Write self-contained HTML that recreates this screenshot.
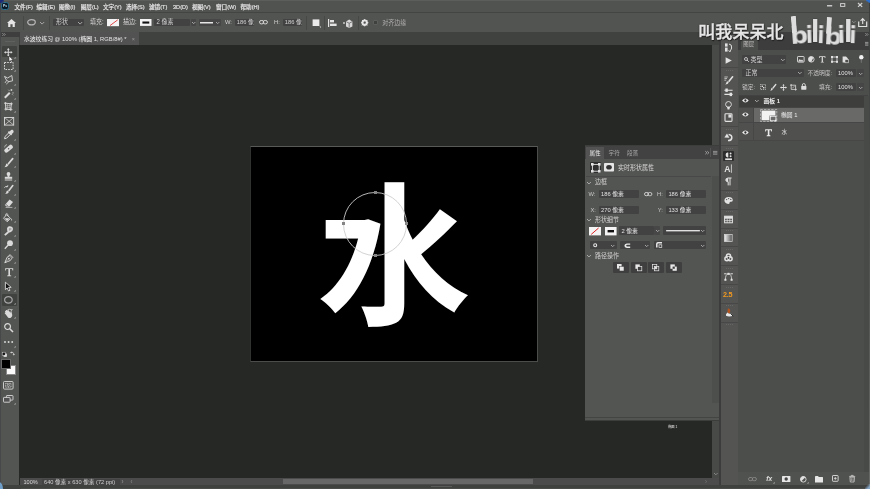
<!DOCTYPE html>
<html lang="zh-CN"><head><meta charset="utf-8"><title>水波纹练习</title>
<style>
*{box-sizing:border-box;margin:0;padding:0}
html,body{width:870px;height:489px;overflow:hidden;background:#262825}
body{position:relative;font-family:"Liberation Sans","Noto Sans CJK SC",sans-serif;color:#d2d2d2;font-size:6px;line-height:8px}
.a{position:absolute}
.t{position:absolute;white-space:nowrap;height:8px;line-height:8px;filter:blur(.35px);transform:scaleY(1.06)}
.m{font-weight:500}
.in{position:absolute;background:#424242;border-radius:1px}
svg{position:absolute;overflow:visible;filter:blur(.3px)}
.sep{position:absolute;width:1px;background:#474947}
.hs{position:absolute;height:1px;background:#434343}
</style></head><body>
<div class="a" style="left:0px;top:0px;width:870px;height:13px;background:#515350;"></div>
<div class="a" style="left:0px;top:0px;width:870px;height:1px;background:#5c5e5c;"></div>
<div class="a" style="left:0px;top:12px;width:870px;height:19.8px;background:#525451;border-top:1px solid #434543"></div>
<div class="a" style="left:0px;top:31.6px;width:721px;height:13.9px;background:#40423f;"></div>
<div class="a" style="left:20.4px;top:32.2px;width:118.4px;height:13.3px;background:#525252;"></div>
<div class="a" style="left:19.5px;top:45.5px;width:692.5px;height:432.5px;background:#262825;"></div>
<div class="a" style="left:250px;top:145.9px;width:288px;height:216.1px;background:#000;border:1px solid #4b4d4b;border-top:1.6px solid #585a58;border-left-color:#303230"></div>
<div class="a" style="left:712px;top:45px;width:7.3px;height:433px;background:#484a48;"></div>
<div class="a" style="left:20px;top:478px;width:699px;height:7px;background:#4a4b4a;"></div>
<div class="a" style="left:283px;top:479px;width:250px;height:5px;background:#676767;"></div>
<div class="a" style="left:0px;top:485.2px;width:870px;height:3.8px;background:#3f413f;"></div>
<div class="a" style="left:21px;top:487.8px;width:848px;height:1.2px;background:#4a4c4a;"></div>
<div class="a" style="left:431px;top:485.5px;width:21px;height:1.5px;background:#5a5a5a;"></div>
<div class="a" style="left:0px;top:32px;width:19.3px;height:453.2px;background:#535552;"></div>
<div class="a" style="left:0px;top:32px;width:19.5px;height:4.8px;background:#3e3e3e;"></div>
<div class="a" style="left:0px;top:0px;width:1.4px;height:489px;background:#46484a;"></div>
<div class="a" style="left:719px;top:32px;width:151px;height:453px;background:#3c3c3c;"></div>
<div class="a" style="left:868.7px;top:0px;width:1.3px;height:489px;background:linear-gradient(#3c3e3e 0%,#4a4c4a 40%,#686a68 100%);"></div>
<div class="a" style="left:721px;top:32px;width:17.3px;height:453px;background:#545553;"></div>
<div class="a" style="left:738.3px;top:32px;width:130.5px;height:453px;background:#4c4e4b;"></div>
<div class="a" style="left:1.2px;top:2.2px;width:7.6px;height:7.4px;background:#0a1a28;border:1.3px solid #2b6f8f;border-radius:2.4px;filter:blur(.35px)"></div>
<div class="t" style="left:2.9px;top:2px;font-size:3.4px;color:#cfe6f5;font-weight:bold">Ps</div>
<div class="t" style="left:14.5px;top:3px;font-size:5.6px;color:#e0e0e0;font-weight:500;-webkit-text-stroke:.18px #e0e0e0">文件(F)</div>
<div class="t" style="left:36.5px;top:3px;font-size:5.6px;color:#e0e0e0;font-weight:500;-webkit-text-stroke:.18px #e0e0e0">编辑(E)</div>
<div class="t" style="left:59px;top:3px;font-size:5.6px;color:#e0e0e0;font-weight:500;-webkit-text-stroke:.18px #e0e0e0">图像(I)</div>
<div class="t" style="left:80.7px;top:3px;font-size:5.6px;color:#e0e0e0;font-weight:500;-webkit-text-stroke:.18px #e0e0e0">图层(L)</div>
<div class="t" style="left:103px;top:3px;font-size:5.6px;color:#e0e0e0;font-weight:500;-webkit-text-stroke:.18px #e0e0e0">文字(Y)</div>
<div class="t" style="left:126px;top:3px;font-size:5.6px;color:#e0e0e0;font-weight:500;-webkit-text-stroke:.18px #e0e0e0">选择(S)</div>
<div class="t" style="left:149px;top:3px;font-size:5.6px;color:#e0e0e0;font-weight:500;-webkit-text-stroke:.18px #e0e0e0">滤镜(T)</div>
<div class="t" style="left:173px;top:3px;font-size:5.6px;color:#e0e0e0;font-weight:500;-webkit-text-stroke:.18px #e0e0e0">3D(D)</div>
<div class="t" style="left:192px;top:3px;font-size:5.6px;color:#e0e0e0;font-weight:500;-webkit-text-stroke:.18px #e0e0e0">视图(V)</div>
<div class="t" style="left:216px;top:3px;font-size:5.6px;color:#e0e0e0;font-weight:500;-webkit-text-stroke:.18px #e0e0e0">窗口(W)</div>
<div class="t" style="left:240.5px;top:3px;font-size:5.6px;color:#e0e0e0;font-weight:500;-webkit-text-stroke:.18px #e0e0e0">帮助(H)</div>
<svg style="left:827.2px;top:5.2px;" width="5.2" height="1.6" viewBox="0 0 5.2 1.6"><rect width="5.2" height="1.5" fill="#c8c8c8"/></svg>
<svg style="left:840px;top:3px;" width="5.4" height="4" viewBox="0 0 5.4 4"><rect x=".6" y=".6" width="4.2" height="2.8" fill="none" stroke="#cfcfcf" stroke-width="1"/></svg>
<svg style="left:857.7px;top:3px;" width="4.2" height="3.9" viewBox="0 0 4.2 3.9"><path d="M0 0L4.2 3.9M4.2 0L0 3.9" stroke="#d0d0d0" stroke-width="1.25"/></svg>
<svg style="left:7px;top:19px;" width="9" height="8" viewBox="0 0 9 8"><path d="M4.5 0L9 4H7.8V8H5.6V5.2H3.4V8H1.2V4H0Z" fill="#e6e6e6"/></svg>
<div class="sep" style="left:23px;top:16px;height:14px"></div>
<div class="sep" style="left:49px;top:16px;height:14px"></div>
<svg style="left:26.7px;top:19.4px;" width="9" height="6.6" viewBox="0 0 9 6.6"><ellipse cx="4.5" cy="3.3" rx="3.8" ry="2.6" fill="none" stroke="#b4b4b4" stroke-width="1.3"/></svg>
<svg style="left:40.4px;top:21.95px;" width="4.2" height="2.1" viewBox="0 0 4.2 2.1"><path d="M0 0L2.1 2.1L4.2 0" fill="none" stroke="#ababab" stroke-width="0.95"/></svg>
<div class="in" style="left:53px;top:18.7px;width:30.5px;height:7.5px;background:#424242;"></div>
<div class="t" style="left:56px;top:18.4px;font-size:6px;">形状</div>
<svg style="left:78.2px;top:21.95px;" width="4.2" height="2.1" viewBox="0 0 4.2 2.1"><path d="M0 0L2.1 2.1L4.2 0" fill="none" stroke="#ababab" stroke-width="0.95"/></svg>
<div class="t" style="left:90px;top:18.4px;font-size:6px;">填充:</div>
<svg style="left:107px;top:18.9px;" width="12" height="7.2" viewBox="0 0 12 7.2"><rect width="12" height="7.2" fill="#f4f4f4"/><path d="M3 6.6L10.8 .8" stroke="#d33" stroke-width=".9"/></svg>
<div class="t" style="left:123px;top:18.4px;font-size:6px;">描边:</div>
<svg style="left:140px;top:19.1px;" width="11.5" height="6.9" viewBox="0 0 11.5 6.9"><rect width="11.5" height="6.9" fill="#f4f4f4"/><rect x="2.4" y="2.5" width="6.9" height="2.1" fill="#111"/></svg>
<div class="in" style="left:154px;top:18.7px;width:36px;height:7.5px;background:#424242;"></div>
<div class="t" style="left:156.5px;top:18.4px;font-size:6px;">2 像素</div>
<div class="in" style="left:190.5px;top:18.7px;width:5.5px;height:7.5px;background:#464646;"></div>
<svg style="left:191.51999999999998px;top:22.16px;" width="3.36" height="1.68" viewBox="0 0 3.36 1.68"><path d="M0 0L1.68 1.68L3.36 0" fill="none" stroke="#ababab" stroke-width="0.95"/></svg>
<div class="in" style="left:199px;top:18.7px;width:22px;height:7.5px;background:#464646;"></div>
<svg style="left:200.4px;top:21.9px;" width="13" height="1.5" viewBox="0 0 13 1.5"><rect width="13" height="1.5" fill="#e6e6e6"/></svg>
<svg style="left:215.62px;top:22.16px;" width="3.36" height="1.68" viewBox="0 0 3.36 1.68"><path d="M0 0L1.68 1.68L3.36 0" fill="none" stroke="#ababab" stroke-width="0.95"/></svg>
<div class="t" style="left:225px;top:18.4px;font-size:5.8px;">W:</div>
<div class="in" style="left:235px;top:18.7px;width:19px;height:7.5px;background:#424242;"></div>
<div class="t" style="left:236.8px;top:18.4px;font-size:5.8px;">186 像</div>
<svg style="left:259px;top:20.3px;" width="9" height="4.6" viewBox="0 0 9 4.6"><rect x=".5" y=".5" width="4.2" height="3.4" rx="1.7" fill="none" stroke="#d8d8d8" stroke-width="1"/><rect x="4.2" y=".5" width="4.2" height="3.4" rx="1.7" fill="none" stroke="#d8d8d8" stroke-width="1"/></svg>
<div class="t" style="left:274px;top:18.4px;font-size:5.8px;">H:</div>
<div class="in" style="left:283px;top:18.7px;width:19px;height:7.5px;background:#424242;"></div>
<div class="t" style="left:284.8px;top:18.4px;font-size:5.8px;">186 像</div>
<div class="sep" style="left:306px;top:16px;height:14px"></div>
<svg style="left:311.7px;top:19px;" width="9" height="9" viewBox="0 0 9 9"><rect x=".6" y=".4" width="6.8" height="6.6" fill="#e9e9e9"/><path d="M7.4 7.6h1.6v1.4z" fill="#ddd"/></svg>
<div class="sep" style="left:323.5px;top:16px;height:14px"></div>
<svg style="left:327.5px;top:19px;" width="9" height="8" viewBox="0 0 9 8"><path d="M.6 0V8" stroke="#e4e4e4" stroke-width="1.2"/><rect x="2" y="1" width="4" height="2.4" fill="#e4e4e4"/><rect x="2" y="4.6" width="6.6" height="2.4" fill="#e4e4e4"/></svg>
<svg style="left:343px;top:18.5px;" width="10" height="9" viewBox="0 0 10 9"><path d="M0 4h2M1 3v2" stroke="#ddd" stroke-width=".8"/><path d="M3 2.6L6.2 .6L9.4 2.6V7.4L6.2 9L3 7.4Z" fill="#d8d8d8"/><path d="M3.4 2.8L6.2 4.2L9 2.8M6.2 4.2V8.6" stroke="#555" stroke-width=".7" fill="none"/></svg>
<div class="sep" style="left:358px;top:16px;height:14px"></div>
<svg style="left:361px;top:19.1px;" width="7.4" height="7.4" viewBox="0 0 8.4 8.4"><circle cx="4.2" cy="4.2" r="2.6" fill="none" stroke="#e6e6e6" stroke-width="2"/><path d="M4.2 0V8.4M0 4.2H8.4M1.2 1.2L7.2 7.2M7.2 1.2L1.2 7.2" stroke="#e6e6e6" stroke-width="1.1"/><circle cx="4.2" cy="4.2" r="1.3" fill="#525451"/></svg>
<div class="a" style="left:373.2px;top:20.4px;width:4.8px;height:4.8px;background:#3f413f;border:.7px solid #5c5e5c;border-radius:1px"></div>
<div class="t" style="left:382.3px;top:18.7px;font-size:6px;color:#b0b0b0;">对齐边缘</div>
<div class="t" style="left:24px;top:34.5px;font-size:5.8px;color:#e2e2e2;font-weight:500">水波纹练习 @ 100% (椭圆 1, RGB/8#) *</div>
<div class="t" style="left:131.8px;top:34.5px;font-size:5.5px;color:#9c9c9c;">×</div>
<div class="t" style="left:23.5px;top:478px;font-size:5.6px;color:#d8d8d8;">100%</div>
<div class="a" style="left:42px;top:478.5px;width:77.5px;height:6.5px;background:#424342;"></div>
<div class="t" style="left:44px;top:478px;font-size:5.65px;color:#cfcfcf;">640 像素 x 630 像素 (72 ppi)</div>
<div class="t" style="left:121.5px;top:478px;font-size:6px;color:#9a9a9a;">›</div>
<div class="t" style="left:130.5px;top:478px;font-size:6px;color:#8a8a8a;">‹</div>
<div class="t" style="left:705px;top:478px;font-size:6px;color:#7a7a7a;">›</div>
<svg style="left:713.68px;top:473.09px;" width="3.64" height="1.82" viewBox="0 0 3.64 1.82"><path d="M0 0L1.82 1.82L3.64 0" fill="none" stroke="#8a8a8a" stroke-width="0.95"/></svg>
<svg style="left:2.2px;top:33px;" width="3.6" height="3" viewBox="0 0 3.6 3"><path d="M.3 .2L1.6 1.5L.3 2.8M2 .2L3.3 1.5L2 2.8" fill="none" stroke="#a8a8a8" stroke-width=".7"/></svg>
<div class="a" style="left:5px;top:40.6px;width:10px;height:1px;background:#606060;"></div>
<div class="a" style="left:1.5px;top:46.2px;width:15.8px;height:11.3px;background:#404240;border-radius:1px"></div>
<div class="a" style="left:1.5px;top:294px;width:15.8px;height:11.8px;background:#404240;border-radius:1px"></div>
<svg style="left:4.000000000000001px;top:47.800000000000004px;" width="8.6" height="8.6" viewBox="0 0 8.6 8.6"><path d="M4.3 0L5.7 1.8H4.8V3.8H6.8V2.9L8.6 4.3L6.8 5.7V4.8H4.8V6.8H5.7L4.3 8.6L2.9 6.8H3.8V4.8H1.8V5.7L0 4.3L1.8 2.9V3.8H3.8V1.8H2.9Z" fill="#dadada"/></svg>
<svg style="left:13.8px;top:56.5px;" width="1.6" height="1.6" viewBox="0 0 1.6 1.6"><path d="M1.6 0V1.6H0Z" fill="#c8c8c8"/></svg>
<svg style="left:8.6px;top:56.2px;" width="5" height="7" viewBox="0 0 5 7"><path d="M0 0L0 5.6L1.4 4.4L2.4 6.6L3.4 6.1L2.4 4L4.2 4Z" fill="#fff" stroke="#222" stroke-width=".5"/></svg>
<svg style="left:3.500000000000001px;top:62.22px;" width="9.6" height="8" viewBox="0 0 9.6 8"><rect x=".5" y=".5" width="8.6" height="7" fill="none" stroke="#dadada" stroke-width="1" stroke-dasharray="1.6 1.1"/></svg>
<svg style="left:13.8px;top:70.22px;" width="1.6" height="1.6" viewBox="0 0 1.6 1.6"><path d="M1.6 0V1.6H0Z" fill="#c8c8c8"/></svg>
<svg style="left:3.8000000000000007px;top:75.34px;" width="9" height="9.6" viewBox="0 0 9 9.6"><path d="M.5 1.4L3.6 3L7.8 .5L8.6 5.8L5 6.6L2.6 5.4Z" fill="none" stroke="#dadada" stroke-width=".9"/><path d="M5 6.6L2.2 9.2M2.6 5.4L1 8" fill="none" stroke="#dadada" stroke-width=".8"/></svg>
<svg style="left:13.8px;top:83.94px;" width="1.6" height="1.6" viewBox="0 0 1.6 1.6"><path d="M1.6 0V1.6H0Z" fill="#c8c8c8"/></svg>
<svg style="left:3.6000000000000005px;top:88.86px;" width="9.4" height="9.6" viewBox="0 0 9.4 9.6"><path d="M.8 8.8L5.8 3.8" stroke="#dadada" stroke-width="2"/><path d="M7.4 0V2M6.4 1h2M9 3.2v1.4M4.4 .8l1 1M8.2 5.4l.8.8" stroke="#dadada" stroke-width=".8"/></svg>
<svg style="left:13.8px;top:97.66px;" width="1.6" height="1.6" viewBox="0 0 1.6 1.6"><path d="M1.6 0V1.6H0Z" fill="#c8c8c8"/></svg>
<svg style="left:3.8000000000000007px;top:102.47999999999999px;" width="9" height="9" viewBox="0 0 9 9"><path d="M1.4 1.2L7.4 1.8L6.8 7.6L1.8 7.2Z" fill="none" stroke="#dadada" stroke-width=".9"/><path d="M1.5 3.2L7.2 3.7M1.7 5.2L7 5.7M3.4 1.4L3.5 7.3M5.4 1.6L5.2 7.5" stroke="#dadada" stroke-width=".45"/><path d="M1.4 0V2M0 1.2H2.6M7.4 .4V3M6 1.8H8.8M6.8 6V9M5.4 7.6H8.4M1.8 5.8V8.6M.4 7.2H3" stroke="#dadada" stroke-width=".8"/></svg>
<svg style="left:13.8px;top:111.38px;" width="1.6" height="1.6" viewBox="0 0 1.6 1.6"><path d="M1.6 0V1.6H0Z" fill="#c8c8c8"/></svg>
<svg style="left:3.800000000000001px;top:116.80000000000001px;" width="10.2" height="8.6" viewBox="0 0 10.2 8.6"><rect x=".5" y=".5" width="9.2" height="7.6" fill="none" stroke="#dadada" stroke-width=".9"/><path d="M.5 .5L9.7 8.1M9.7 .5L.5 8.1" stroke="#dadada" stroke-width=".7"/></svg>
<svg style="left:3.6000000000000005px;top:130.12px;" width="9.4" height="9.4" viewBox="0 0 9.4 9.4"><path d="M.6 8.8L1 6.6L5 2.6L6.6 4.2L2.6 8.2Z" fill="none" stroke="#dadada" stroke-width="1"/><path d="M4.4 1.6L7.6 4.8M5.6 2.8L7.4 .8Q8.4 .2 8.8 1.2Q9 2 8.2 2.6L6.4 4" stroke="#dadada" stroke-width="1.7" fill="#dadada"/></svg>
<svg style="left:13.8px;top:138.82px;" width="1.6" height="1.6" viewBox="0 0 1.6 1.6"><path d="M1.6 0V1.6H0Z" fill="#c8c8c8"/></svg>
<svg style="left:3.6000000000000005px;top:143.84000000000003px;" width="9.4" height="9.4" viewBox="0 0 9.4 9.4"><rect x="-.2" y="2.6" width="9.6" height="4.2" rx="1.6" transform="rotate(-40 4.6 4.7)" fill="#dadada"/><circle cx="4.6" cy="4.7" r=".7" fill="#555"/><path d="M.6 3.4Q.8 .8 3 .6" stroke="#dadada" stroke-width=".7" fill="none"/></svg>
<svg style="left:13.8px;top:152.54000000000002px;" width="1.6" height="1.6" viewBox="0 0 1.6 1.6"><path d="M1.6 0V1.6H0Z" fill="#c8c8c8"/></svg>
<svg style="left:3.6000000000000005px;top:157.56px;" width="9.4" height="9.4" viewBox="0 0 9.4 9.4"><path d="M8.7 .6L4.4 5.8" stroke="#dadada" stroke-width="1.7" stroke-linecap="round"/><path d="M2.8 5.6L4.4 7.2Q3.4 9.2 .4 9.2Q1.8 8 1.8 7Q2 6 2.8 5.6Z" fill="#dadada"/></svg>
<svg style="left:13.8px;top:166.26px;" width="1.6" height="1.6" viewBox="0 0 1.6 1.6"><path d="M1.6 0V1.6H0Z" fill="#c8c8c8"/></svg>
<svg style="left:3.8000000000000007px;top:171.68px;" width="9" height="8.6" viewBox="0 0 9 8.6"><circle cx="4.5" cy="1.9" r="1.9" fill="#dadada"/><path d="M3.6 3V5H5.4V3Z" fill="#dadada"/><path d="M.8 4.8H8.2V6.8H.8Z" fill="#dadada"/><rect x=".8" y="7.5" width="7.4" height="1" fill="#dadada"/></svg>
<svg style="left:13.8px;top:179.98000000000002px;" width="1.6" height="1.6" viewBox="0 0 1.6 1.6"><path d="M1.6 0V1.6H0Z" fill="#c8c8c8"/></svg>
<svg style="left:3.6000000000000005px;top:185.00000000000003px;" width="9.4" height="9.4" viewBox="0 0 9.4 9.4"><path d="M8.8 .6L5 5.6" stroke="#dadada" stroke-width="1.6" stroke-linecap="round"/><path d="M3.4 5.6L5 7Q4 9 1.2 9Q2.4 7.8 2.4 6.8Q2.6 6 3.4 5.6Z" fill="#dadada"/><path d="M.4 2.6Q1.6 .8 3.6 1.6M3.6 1.6L3.8 .3M3.6 1.6L2.4 2" stroke="#dadada" stroke-width=".9" fill="none"/></svg>
<svg style="left:13.8px;top:193.70000000000002px;" width="1.6" height="1.6" viewBox="0 0 1.6 1.6"><path d="M1.6 0V1.6H0Z" fill="#c8c8c8"/></svg>
<svg style="left:3.6000000000000005px;top:198.92000000000002px;" width="9.4" height="9" viewBox="0 0 9.4 9"><path d="M5.6 .6L9 3L5.4 7.4H2.6L.8 6Z" fill="#dadada"/><path d="M1.6 5.2L4.2 7.2" stroke="#555" stroke-width=".7"/><path d="M1.6 8.4H8.4" stroke="#dadada" stroke-width=".7"/></svg>
<svg style="left:13.8px;top:207.42000000000002px;" width="1.6" height="1.6" viewBox="0 0 1.6 1.6"><path d="M1.6 0V1.6H0Z" fill="#c8c8c8"/></svg>
<svg style="left:3.4000000000000004px;top:212.54000000000002px;" width="9.8" height="9.2" viewBox="0 0 9.8 9.2"><path d="M3.6 1.6L7.6 5.4L4.2 8.8L.6 5.2Z" fill="none" stroke="#dadada" stroke-width=".9"/><path d="M1.6 5.2H6.8L4.2 8Z" fill="#dadada"/><path d="M2.8 2.8Q2.2 .4 3.8 .4Q5.2 .6 5 3.2" stroke="#dadada" stroke-width=".7" fill="none"/><path d="M8.5 5.2Q9.8 7.2 8.7 7.8Q7.6 7.4 8.5 5.2Z" fill="#dadada"/></svg>
<svg style="left:13.8px;top:221.14000000000001px;" width="1.6" height="1.6" viewBox="0 0 1.6 1.6"><path d="M1.6 0V1.6H0Z" fill="#c8c8c8"/></svg>
<svg style="left:3.6000000000000005px;top:226.06px;" width="9.4" height="9.6" viewBox="0 0 9.4 9.6"><path d="M5 .3Q8.8 0 9 3Q8.8 5.6 6.4 6.2L4.6 6.8Q2.8 5 3 2.8Q3.4 .8 5 .3Z" fill="#dadada"/><path d="M4.4 6L.8 9.2" stroke="#dadada" stroke-width="1.8"/><path d="M5.4 2.2V4.6M6.8 2V4.2" stroke="#555" stroke-width=".5"/></svg>
<svg style="left:13.8px;top:234.86px;" width="1.6" height="1.6" viewBox="0 0 1.6 1.6"><path d="M1.6 0V1.6H0Z" fill="#c8c8c8"/></svg>
<svg style="left:3.6000000000000005px;top:239.88000000000002px;" width="9.4" height="9.4" viewBox="0 0 9.4 9.4"><circle cx="6" cy="3.2" r="2.9" fill="#dadada"/><path d="M4 5.2L.8 8.8" stroke="#dadada" stroke-width="1.3"/></svg>
<svg style="left:13.8px;top:248.58px;" width="1.6" height="1.6" viewBox="0 0 1.6 1.6"><path d="M1.6 0V1.6H0Z" fill="#c8c8c8"/></svg>
<svg style="left:3.6000000000000005px;top:253.60000000000002px;" width="9.4" height="9.4" viewBox="0 0 9.4 9.4"><path d="M6 .6L8.8 3.4L7.6 4.6Q7 7 3.6 7.6L.8 8.8L2 6Q2.6 2.6 5 2Z" fill="none" stroke="#dadada" stroke-width=".95"/><circle cx="4.9" cy="4.7" r=".9" fill="#dadada"/><path d="M1 8.6L4.4 5.2" stroke="#dadada" stroke-width=".6"/><path d="M5.2 1.6L7.8 4.2" stroke="#dadada" stroke-width=".7"/></svg>
<svg style="left:13.8px;top:262.3px;" width="1.6" height="1.6" viewBox="0 0 1.6 1.6"><path d="M1.6 0V1.6H0Z" fill="#c8c8c8"/></svg>
<svg style="left:4.700000000000001px;top:267.82px;" width="8.4" height="8.4" viewBox="0 0 8.4 8.4"><path d="M.2 .2H8.2V2.4H7.5L7.1 1.1H5V7.3L6.2 7.6V8.2H2.2V7.6L3.4 7.3V1.1H1.3L.9 2.4H.2Z" fill="#dadada"/></svg>
<svg style="left:13.8px;top:276.02px;" width="1.6" height="1.6" viewBox="0 0 1.6 1.6"><path d="M1.6 0V1.6H0Z" fill="#c8c8c8"/></svg>
<svg style="left:5.200000000000001px;top:281.64000000000004px;" width="6.6" height="9.4" viewBox="0 0 6.6 9.4"><path d="M.4 .2L.4 7.6L2.2 6L3.6 9L5 8.3L3.6 5.4L6.2 5.4Z" fill="#111" stroke="#eee" stroke-width=".8"/></svg>
<svg style="left:13.8px;top:289.74px;" width="1.6" height="1.6" viewBox="0 0 1.6 1.6"><path d="M1.6 0V1.6H0Z" fill="#c8c8c8"/></svg>
<svg style="left:3.9000000000000004px;top:295.76000000000005px;" width="8.8" height="7.8" viewBox="0 0 8.8 7.8"><ellipse cx="4.4" cy="3.9" rx="3.8" ry="3.3" fill="none" stroke="#a6a6a6" stroke-width="1.2"/></svg>
<svg style="left:13.8px;top:303.46000000000004px;" width="1.6" height="1.6" viewBox="0 0 1.6 1.6"><path d="M1.6 0V1.6H0Z" fill="#c8c8c8"/></svg>
<svg style="left:4.000000000000001px;top:309.18px;" width="9" height="9.6" viewBox="0 0 9 9.6"><g transform="rotate(-38 4.5 5)"><path d="M2 4.4V2Q2.6 1.2 3.2 2V1Q3.8 .2 4.4 1V.8Q5 0 5.6 .8V1.6Q6.2 .9 6.8 1.7V5.6Q7 4.4 8.2 4.2Q8.8 4.4 8.2 5.2L6.8 8.2Q6 9.4 4.4 9.4Q2.4 9.2 2 7.4Z" fill="#dadada"/></g><path d="M3.6 .6Q6 -.4 8 1.2M8 1.2L8.2 0M8 1.2L6.8 1.4" stroke="#dadada" stroke-width=".7" fill="none"/></svg>
<svg style="left:13.8px;top:317.18px;" width="1.6" height="1.6" viewBox="0 0 1.6 1.6"><path d="M1.6 0V1.6H0Z" fill="#c8c8c8"/></svg>
<svg style="left:4.0px;top:323.20000000000005px;" width="9.4" height="9.4" viewBox="0 0 9.4 9.4"><circle cx="3.6" cy="3.6" r="2.9" fill="none" stroke="#dadada" stroke-width="1.2"/><path d="M5.8 5.8L9 9" stroke="#dadada" stroke-width="1.6"/></svg>
<svg style="left:3.600000000000001px;top:341.02px;" width="9.2" height="2" viewBox="0 0 9.2 2"><circle cx="1" cy="1" r=".95" fill="#dadada"/><circle cx="4.6" cy="1" r=".95" fill="#dadada"/><circle cx="8.2" cy="1" r=".95" fill="#dadada"/></svg>
<svg style="left:13.8px;top:346px;" width="1.6" height="1.6" viewBox="0 0 1.6 1.6"><path d="M1.6 0V1.6H0Z" fill="#c8c8c8"/></svg>
<svg style="left:1.6px;top:351.6px;" width="5" height="5" viewBox="0 0 5 5"><rect x="1.6" y="1.6" width="3.2" height="3.2" fill="#eee"/><rect x=".2" y=".2" width="3" height="3" fill="#111" stroke="#ddd" stroke-width=".5"/></svg>
<svg style="left:10.4px;top:351.4px;" width="5" height="5" viewBox="0 0 5 5"><path d="M.8 1.6Q3.6 .4 3.8 3.6" fill="none" stroke="#ddd" stroke-width=".8"/><path d="M.2 1.6L1.6 .4V2.6ZM3.8 4.6L2.6 3.2H5Z" fill="#ddd"/></svg>
<div class="a" style="left:6.3px;top:364.6px;width:9.4px;height:10.2px;background:#fbfbfb;border:.6px solid #888"></div>
<div class="a" style="left:1px;top:359.2px;width:9.6px;height:10.2px;background:#000;border:.7px solid #6a6a6a"></div>
<svg style="left:3.3px;top:380.5px;" width="10.6" height="8.6" viewBox="0 0 10.6 8.6"><rect x=".5" y=".5" width="9.6" height="7.6" rx="1" fill="none" stroke="#d8d8d8" stroke-width=".9"/><rect x="2.6" y="2.4" width="5.4" height="3.8" fill="none" stroke="#d8d8d8" stroke-width=".8" stroke-dasharray="1 .6"/><circle cx="5.3" cy="4.3" r="1.1" fill="none" stroke="#d8d8d8" stroke-width=".6"/></svg>
<svg style="left:3.4px;top:394.6px;" width="10.6" height="8" viewBox="0 0 10.6 8"><rect x="3.4" y=".5" width="6.6" height="4.6" rx=".6" fill="#535353" stroke="#d8d8d8" stroke-width=".9"/><rect x=".5" y="2.4" width="6.6" height="4.8" rx=".6" fill="#535353" stroke="#d8d8d8" stroke-width=".9"/></svg>
<svg style="left:13.8px;top:402.6px;" width="1.6" height="1.6" viewBox="0 0 1.6 1.6"><path d="M1.6 0V1.6H0Z" fill="#c8c8c8"/></svg>
<div class="a" style="left:721px;top:32px;width:17.3px;height:8px;background:#3e3e3e;"></div>
<div class="a" style="left:738.3px;top:32px;width:130.5px;height:6px;background:#3e3e3e;"></div>
<svg style="left:731.4px;top:34.6px;" width="3.6" height="3" viewBox="0 0 3.6 3"><path d="M1.6 .2L.3 1.5L1.6 2.8M3.3 .2L2 1.5L3.3 2.8" fill="none" stroke="#a8a8a8" stroke-width=".7"/></svg>
<svg style="left:724.1px;top:42.5px;" width="9" height="9" viewBox="0 0 9 9"><rect x="1" y=".4" width="2.6" height="3.2" fill="#e2e2e2"/><rect x="1" y="4.6" width="2.6" height="4" fill="#e2e2e2"/><path d="M5 1Q8.2 1.4 7.6 5Q7.4 7 5.6 8.2" stroke="#e2e2e2" stroke-width="1" fill="none"/><path d="M4.6 7.2L5.4 8.6L7 8" stroke="#e2e2e2" stroke-width=".8" fill="none"/></svg>
<svg style="left:724.1px;top:56.2px;" width="9" height="9" viewBox="0 0 9 9"><path d="M1.6 1.2L7.8 4.5L1.6 7.8Z" fill="#e2e2e2"/></svg>
<div class="a" style="left:721px;top:67.4px;width:17.3px;height:0.9px;background:#474847;"></div>
<div class="a" style="left:725.5px;top:69.80000000000001px;width:7px;height:0;border-top:.8px dotted #666"></div>
<svg style="left:724.1px;top:75.5px;" width="9" height="9" viewBox="0 0 9 9"><path d="M8.6 .8L5 5.2" stroke="#e2e2e2" stroke-width="1.6" stroke-linecap="round"/><path d="M3.4 5.2L4.8 6.4Q4 8.4 1.2 8.6Q2.4 7.4 2.4 6.6Q2.6 5.6 3.4 5.2Z" fill="#e2e2e2"/><path d="M.4 1h3.4M.4 2.6h2.6M.4 4.2h1.8" stroke="#e2e2e2" stroke-width=".75"/></svg>
<svg style="left:724.1px;top:88.1px;" width="9" height="9" viewBox="0 0 9 9"><path d="M.4 2.2H8.6M.4 6.4H8.6" stroke="#e2e2e2" stroke-width="1.1"/><rect x="1.4" y=".5" width="2.4" height="3.4" fill="#e2e2e2"/><rect x="5.6" y="4.7" width="2.4" height="3.4" fill="#e2e2e2"/></svg>
<svg style="left:724.1px;top:100.5px;" width="9" height="9" viewBox="0 0 9 9"><path d="M4.5 .5Q7.4 .6 7.4 3.4Q7.2 5 6 6H3Q1.8 5 1.6 3.4Q1.6 .6 4.5 .5Z" fill="none" stroke="#e2e2e2" stroke-width=".9"/><path d="M3 6H6L5.4 8.6H3.6Z" fill="#e2e2e2"/></svg>
<svg style="left:724.1px;top:113.3px;" width="9" height="9" viewBox="0 0 9 9"><rect x="1" y=".8" width="7" height="7.6" rx=".8" fill="none" stroke="#e2e2e2" stroke-width="1.1"/><rect x="4.4" y="1.4" width="3" height="3.2" fill="#e2e2e2"/></svg>
<div class="a" style="left:721px;top:126.3px;width:17.3px;height:0.9px;background:#474847;"></div>
<div class="a" style="left:725.5px;top:128.7px;width:7px;height:0;border-top:.8px dotted #666"></div>
<svg style="left:724.1px;top:132.5px;" width="9" height="9" viewBox="0 0 9 9"><path d="M4.6 1.6Q8 2 7.8 5Q7.2 7.8 4 7.6" stroke="#e2e2e2" stroke-width="1.5" fill="none"/><path d="M.4 4.6L3 .6L5.4 4.8Z" fill="#e2e2e2"/></svg>
<div class="a" style="left:721px;top:145.3px;width:17.3px;height:0.9px;background:#474847;"></div>
<div class="a" style="left:725.5px;top:147.70000000000002px;width:7px;height:0;border-top:.8px dotted #666"></div>
<div class="a" style="left:722.6px;top:150.9px;width:11px;height:10.4px;background:#2c2c2c;border-radius:1px"></div>
<svg style="left:724.1px;top:151.7px;" width="9" height="9" viewBox="0 0 9 9"><path d="M4 .6A2.4 2.4 0 0 0 4 5.4Z" fill="#e2e2e2"/><path d="M4 .6V5.4" stroke="#e2e2e2" stroke-width=".6"/><circle cx="6.6" cy="1.5" r=".95" fill="#e2e2e2"/><circle cx="6.6" cy="4.3" r=".95" fill="#e2e2e2"/><rect x="1.2" y="6.4" width="6.8" height="1.7" fill="#e2e2e2"/></svg>
<svg style="left:724.1px;top:164.3px;" width="9" height="9" viewBox="0 0 9 9"><text x=".2" y="7.6" font-size="8.6" font-weight="bold" fill="#e2e2e2" font-family="Liberation Sans,sans-serif">A</text><path d="M7.4 .4V8.8" stroke="#e2e2e2" stroke-width=".8"/></svg>
<svg style="left:724.1px;top:176.5px;" width="9" height="9" viewBox="0 0 9 9"><path d="M7.6 1H4Q1.6 1.2 1.8 3.2Q2 4.8 4.2 4.8V8.4M6 1V8.4" stroke="#e2e2e2" stroke-width="1" fill="none"/><path d="M4.2 1Q1.8 1.2 1.8 3Q2 4.6 4.2 4.8Z" fill="#e2e2e2"/></svg>
<div class="a" style="left:721px;top:189.9px;width:17.3px;height:0.9px;background:#474847;"></div>
<div class="a" style="left:725.5px;top:192.3px;width:7px;height:0;border-top:.8px dotted #666"></div>
<svg style="left:724.1px;top:195.8px;" width="9" height="9" viewBox="0 0 9 9"><path d="M4.6 1Q8.6 1 8.8 4.2Q8.6 6 6.6 5.8Q5.4 5.8 5.6 6.8Q5.6 8 4.2 8Q.6 7.6 .4 4.6Q.6 1.2 4.6 1Z" fill="#e2e2e2"/><circle cx="2.6" cy="3.6" r=".7" fill="#535353"/><circle cx="4.6" cy="2.6" r=".7" fill="#535353"/><circle cx="6.8" cy="3.4" r=".7" fill="#535353"/></svg>
<div class="a" style="left:721px;top:208.7px;width:17.3px;height:0.9px;background:#474847;"></div>
<div class="a" style="left:725.5px;top:211.1px;width:7px;height:0;border-top:.8px dotted #666"></div>
<svg style="left:724.1px;top:214.5px;" width="9" height="9" viewBox="0 0 9 9"><rect x=".6" y="1.2" width="7.8" height="6.6" fill="none" stroke="#e2e2e2" stroke-width="1"/><path d="M.6 3.4H8.4M.6 5.6H8.4M3.2 3.4V7.8M5.8 3.4V7.8" stroke="#e2e2e2" stroke-width=".7"/><rect x=".6" y="1.2" width="7.8" height="2" fill="#e2e2e2"/></svg>
<div class="a" style="left:721px;top:227.6px;width:17.3px;height:0.9px;background:#474847;"></div>
<div class="a" style="left:725.5px;top:230.0px;width:7px;height:0;border-top:.8px dotted #666"></div>
<svg style="left:724.4px;top:234.4px;" width="8.6" height="8" viewBox="0 0 8.6 8"><defs><linearGradient id="gr1" x1="0" x2="1"><stop offset="0" stop-color="#f2f2f2"/><stop offset="1" stop-color="#555"/></linearGradient></defs><rect x=".4" y=".4" width="7.8" height="7.2" fill="url(#gr1)" stroke="#d8d8d8" stroke-width=".7"/></svg>
<div class="a" style="left:721px;top:246.4px;width:17.3px;height:0.9px;background:#474847;"></div>
<div class="a" style="left:725.5px;top:248.8px;width:7px;height:0;border-top:.8px dotted #666"></div>
<svg style="left:724.1px;top:253.0px;" width="9" height="9" viewBox="0 0 9 9"><circle cx="4.5" cy="3" r="2" fill="none" stroke="#e2e2e2" stroke-width="1.5"/><circle cx="2.9" cy="5.7" r="2" fill="none" stroke="#e2e2e2" stroke-width="1.5"/><circle cx="6.1" cy="5.7" r="2" fill="none" stroke="#e2e2e2" stroke-width="1.5"/><circle cx="4.5" cy="4.9" r=".9" fill="#2a2a2a"/></svg>
<div class="a" style="left:721px;top:265.3px;width:17.3px;height:0.9px;background:#474847;"></div>
<div class="a" style="left:725.5px;top:267.7px;width:7px;height:0;border-top:.8px dotted #666"></div>
<svg style="left:724.1px;top:271.5px;" width="9" height="9" viewBox="0 0 9 9"><path d="M1.4 7.8Q1.4 2 4.5 1.8Q7.6 2 7.6 7.8" fill="none" stroke="#e2e2e2" stroke-width=".8"/><path d="M1.6 1.8H7.4" stroke="#e2e2e2" stroke-width=".6"/><rect x=".4" y="6.8" width="2" height="2" fill="#e2e2e2"/><rect x="6.6" y="6.8" width="2" height="2" fill="#e2e2e2"/><rect x="3.5" y=".8" width="2" height="2" fill="#e2e2e2"/><circle cx="1" cy="1.8" r=".8" fill="#e2e2e2"/><circle cx="8" cy="1.8" r=".8" fill="#e2e2e2"/></svg>
<div class="a" style="left:721px;top:284.1px;width:17.3px;height:0.9px;background:#474847;"></div>
<div class="a" style="left:725.5px;top:286.5px;width:7px;height:0;border-top:.8px dotted #666"></div>
<div class="t" style="left:723px;top:290.8px;font-size:7.2px;font-weight:bold;color:#f59a1e;letter-spacing:-.25px">2.5</div>
<div class="a" style="left:721px;top:303px;width:17.3px;height:0.9px;background:#474847;"></div>
<div class="a" style="left:725.5px;top:305.4px;width:7px;height:0;border-top:.8px dotted #666"></div>
<svg style="left:724.6px;top:307.6px;" width="8.4" height="8.6" viewBox="0 0 8.4 8.6"><path d="M3 .4Q5.4 .2 5.2 2.6L5 5.2H2.8Q2.2 2.4 3 .4Z" fill="#b3541e"/><path d="M2.4 4.4Q.4 6 1 7.8Q4 9 8 7.8L6 5.4Q4.4 6.4 2.4 4.4Z" fill="#e8e8e8"/><path d="M5.6 5.6L8.2 8.2" stroke="#222" stroke-width=".9"/></svg>
<div class="a" style="left:721px;top:321.8px;width:17.3px;height:0.9px;background:#474847;"></div>
<div class="a" style="left:725.5px;top:324.2px;width:7px;height:0;border-top:.8px dotted #666"></div>
<div class="a" style="left:738.3px;top:38px;width:130.5px;height:11.6px;background:#3d3d3d;"></div>
<div class="a" style="left:740.5px;top:38.5px;width:17px;height:11.1px;background:#4c4e4b;"></div>
<div class="t" style="left:743.3px;top:40px;font-size:5.4px;color:#c4c4c4;">图层</div>
<svg style="left:865.4px;top:42.4px;" width="3.4" height="3.6" viewBox="0 0 3.4 3.6"><path d="M0 .4H3.4M0 1.8H3.4M0 3.2H3.4" stroke="#b8b8b8" stroke-width=".7"/></svg>
<svg style="left:865px;top:33px;" width="3.4" height="3" viewBox="0 0 3.4 3"><path d="M.3 .2L1.5 1.5L.3 2.8M1.9 .2L3.1 1.5L1.9 2.8" fill="none" stroke="#a8a8a8" stroke-width=".7"/></svg>
<div class="a" style="left:864px;top:95.5px;width:4.8px;height:377.5px;background:#484a47;"></div>
<div class="in" style="left:741.6px;top:55.3px;width:44.4px;height:8.8px;background:#424242;"></div>
<svg style="left:744px;top:57px;" width="5" height="5" viewBox="0 0 5 5"><circle cx="2" cy="2" r="1.5" fill="none" stroke="#ddd" stroke-width=".8"/><path d="M3.1 3.1L4.8 4.8" stroke="#ddd" stroke-width=".9"/></svg>
<div class="t" style="left:750.5px;top:55.6px;font-size:6px;">类型</div>
<svg style="left:781.18px;top:59.09px;" width="3.64" height="1.82" viewBox="0 0 3.64 1.82"><path d="M0 0L1.82 1.82L3.64 0" fill="none" stroke="#ababab" stroke-width="0.95"/></svg>
<svg style="left:797px;top:56.2px;" width="7.6" height="6.6" viewBox="0 0 7.6 6.6"><rect x=".5" y=".5" width="6.6" height="5.6" rx=".6" fill="none" stroke="#e0e0e0" stroke-width=".9"/><path d="M1 5.4L2.8 3L4 4.4L5 3.6L6.6 5.4Z" fill="#e0e0e0"/></svg>
<svg style="left:807.8px;top:56.2px;" width="6.6" height="6.6" viewBox="0 0 6.6 6.6"><circle cx="3.3" cy="3.3" r="2.8" fill="none" stroke="#e0e0e0" stroke-width=".9"/><path d="M3.3 .5A2.8 2.8 0 0 0 3.3 6.1L5.4 1.4Z" fill="#e0e0e0"/></svg>
<svg style="left:819.2px;top:56.2px;" width="6.6" height="6.8" viewBox="0 0 6.6 6.8"><path d="M.2 .2H6.4V2H5.8L5.5 1H3.9V5.7L4.8 6V6.5H1.8V6L2.7 5.7V1H1.1L.8 2H.2Z" fill="#e0e0e0"/></svg>
<svg style="left:830.6px;top:56.2px;" width="7" height="6.8" viewBox="0 0 7 6.8"><rect x="1" y="1" width="5" height="4.8" fill="none" stroke="#e0e0e0" stroke-width=".8"/><rect x="0" y="0" width="2" height="2" fill="#e0e0e0"/><rect x="5" y="0" width="2" height="2" fill="#e0e0e0"/><rect x="0" y="4.8" width="2" height="2" fill="#e0e0e0"/><rect x="5" y="4.8" width="2" height="2" fill="#e0e0e0"/></svg>
<svg style="left:842px;top:56px;" width="6.6" height="7" viewBox="0 0 6.6 7"><path d="M.6 .4H4L6 2.4V6.6H.6Z" fill="#e0e0e0"/><rect x="3" y="3.6" width="3.4" height="3.2" fill="#4d4e4c" stroke="#e0e0e0" stroke-width=".6"/></svg>
<svg style="left:859.4px;top:55.2px;" width="4.6" height="8" viewBox="0 0 4.6 8"><circle cx="2.3" cy="2.3" r="2.2" fill="#f2f2f2"/><path d="M2.3 4.4V7.8" stroke="#7a7a7a" stroke-width=".9"/></svg>
<div class="in" style="left:741.6px;top:68.6px;width:62px;height:8.7px;background:#424242;"></div>
<div class="t" style="left:745.6px;top:69px;font-size:6px;">正常</div>
<svg style="left:798.18px;top:72.49000000000001px;" width="3.64" height="1.82" viewBox="0 0 3.64 1.82"><path d="M0 0L1.82 1.82L3.64 0" fill="none" stroke="#ababab" stroke-width="0.95"/></svg>
<div class="t" style="left:807.4px;top:69px;font-size:5.8px;color:#c4c4c4;">不透明度:</div>
<div class="in" style="left:836.4px;top:68.6px;width:20px;height:8.7px;background:#424242;"></div>
<div class="t" style="left:838px;top:69px;font-size:5.8px;color:#e0e0e0;">100%</div>
<div class="in" style="left:857px;top:68.6px;width:6.5px;height:8.7px;background:#464646;"></div>
<svg style="left:858.5200000000001px;top:72.56px;" width="3.36" height="1.68" viewBox="0 0 3.36 1.68"><path d="M0 0L1.68 1.68L3.36 0" fill="none" stroke="#ababab" stroke-width="0.95"/></svg>
<div class="t" style="left:742px;top:83px;font-size:5.8px;color:#c4c4c4;">锁定:</div>
<svg style="left:760px;top:83.8px;" width="6.4" height="6.4" viewBox="0 0 6.4 6.4"><rect x=".4" y=".4" width="5.2" height="5.2" fill="none" stroke="#ddd" stroke-width=".7" stroke-dasharray="1.2 .8"/><rect x="1.6" y="1.6" width="1.4" height="1.4" fill="#ddd"/><rect x="3" y="3" width="1.4" height="1.4" fill="#ddd"/></svg>
<svg style="left:770.4px;top:83.6px;" width="6.4" height="7" viewBox="0 0 6.4 7"><path d="M5.8 .5L3 4" stroke="#ddd" stroke-width="1.3" stroke-linecap="round"/><path d="M1.8 3.8L3 4.9Q2.4 6.6 .2 6.8Q1.1 5.8 1.1 5Q1.2 4.2 1.8 3.8Z" fill="#ddd"/></svg>
<svg style="left:779.6px;top:83.6px;" width="7" height="7" viewBox="0 0 7 7"><path d="M3.5 0L4.7 1.5H3.9V3.1H5.5V2.3L7 3.5L5.5 4.7V3.9H3.9V5.5H4.7L3.5 7L2.3 5.5H3.1V3.9H1.5V4.7L0 3.5L1.5 2.3V3.1H3.1V1.5H2.3Z" fill="#ddd"/></svg>
<svg style="left:790px;top:83.8px;" width="7" height="6.6" viewBox="0 0 7 6.6"><path d="M1.2 0V5.4H6.8M0 1.2H5.6V6.6" stroke="#ddd" stroke-width=".8" fill="none"/><path d="M2.4 4.2L4.4 2.2" stroke="#ddd" stroke-width=".7"/></svg>
<svg style="left:800.6px;top:83.4px;" width="5.6" height="7" viewBox="0 0 5.6 7"><rect x=".2" y="3" width="5.2" height="3.8" rx=".5" fill="#ddd"/><path d="M1.3 3V2Q1.4 .5 2.8 .5Q4.2 .5 4.3 2V3" fill="none" stroke="#ddd" stroke-width=".9"/></svg>
<div class="t" style="left:819px;top:83px;font-size:5.8px;color:#c4c4c4;">填充:</div>
<div class="in" style="left:836.4px;top:82.6px;width:20px;height:8.2px;background:#424242;"></div>
<div class="t" style="left:838px;top:83px;font-size:5.8px;color:#e0e0e0;">100%</div>
<div class="in" style="left:857px;top:82.6px;width:6.5px;height:8.2px;background:#464646;"></div>
<svg style="left:858.5200000000001px;top:86.56px;" width="3.36" height="1.68" viewBox="0 0 3.36 1.68"><path d="M0 0L1.68 1.68L3.36 0" fill="none" stroke="#ababab" stroke-width="0.95"/></svg>
<div class="a" style="left:739px;top:94.6px;width:129px;height:0.9px;background:#424242;"></div>
<div class="a" style="left:739px;top:107.8px;width:125px;height:32.6px;background:#50514f;"></div>
<div class="a" style="left:739px;top:95.5px;width:125px;height:11.8px;background:#3e3f3d;"></div>
<div class="a" style="left:753.3px;top:107.8px;width:0.7px;height:32.6px;background:#464746;"></div>
<div class="a" style="left:739px;top:107.2px;width:125px;height:0.7px;background:#444544;"></div>
<div class="a" style="left:754px;top:107.8px;width:110px;height:14.2px;background:#696a68;"></div>
<div class="a" style="left:739px;top:122px;width:125px;height:0.7px;background:#454645;"></div>
<div class="a" style="left:739px;top:140.4px;width:125px;height:0.8px;background:#464746;"></div>
<svg style="left:742.4px;top:98.4px;" width="6.8" height="5" viewBox="0 0 6.8 5"><path d="M.1 2.5Q3.4 -1.4 6.7 2.5Q3.4 6.4 .1 2.5Z" fill="#ededed"/><circle cx="3.4" cy="2.5" r="1.15" fill="#2e2e2e"/></svg>
<svg style="left:742.4px;top:112.4px;" width="6.8" height="5" viewBox="0 0 6.8 5"><path d="M.1 2.5Q3.4 -1.4 6.7 2.5Q3.4 6.4 .1 2.5Z" fill="#ededed"/><circle cx="3.4" cy="2.5" r="1.15" fill="#2e2e2e"/></svg>
<svg style="left:742.4px;top:129.8px;" width="6.8" height="5" viewBox="0 0 6.8 5"><path d="M.1 2.5Q3.4 -1.4 6.7 2.5Q3.4 6.4 .1 2.5Z" fill="#ededed"/><circle cx="3.4" cy="2.5" r="1.15" fill="#2e2e2e"/></svg>
<svg style="left:754.78px;top:100.09px;" width="3.64" height="1.82" viewBox="0 0 3.64 1.82"><path d="M0 0L1.82 1.82L3.64 0" fill="none" stroke="#b0b0b0" stroke-width="0.95"/></svg>
<div class="t" style="left:763.5px;top:96.8px;font-size:5.8px;color:#ececec;font-weight:bold">画板 1</div>
<svg style="left:760.3px;top:108.6px;" width="17.2" height="12.8" viewBox="0 0 17.2 12.8"><rect x=".4" y=".4" width="16.4" height="12" fill="none" stroke="#e0e0e0" stroke-width=".6" stroke-dasharray="2.4 1.2"/><rect x="1.6" y="1.6" width="13.8" height="9.6" fill="#f2f2f2"/><rect x="9.4" y="6.6" width="6" height="4.6" fill="#6b6b6b"/><rect x="10.4" y="7.4" width="5.6" height="4.4" fill="none" stroke="#f0f0f0" stroke-width=".7"/><rect x="9.8" y="6.8" width="1.4" height="1.4" fill="#f0f0f0"/><rect x="15" y="10.8" width="1.4" height="1.4" fill="#f0f0f0"/></svg>
<div class="t" style="left:781px;top:111px;font-size:5.8px;color:#ececec;">椭圆 1</div>
<svg style="left:765.4px;top:128.6px;" width="7.2" height="7.4" viewBox="0 0 7.2 7.4"><path d="M.2 .2H7V2.4H6.3L6 1.2H4.4V6.1L5.5 6.5V7.2H1.7V6.5L2.8 6.1V1.2H1.2L.9 2.4H.2Z" fill="#ececec"/></svg>
<div class="t" style="left:781.4px;top:127.80000000000001px;font-size:5.6px;color:#e0e0e0;">水</div>
<div class="a" style="left:738.3px;top:472.2px;width:130.4px;height:12.6px;background:#50524f;"></div>
<svg style="left:748px;top:476.6px;" width="9" height="4.4" viewBox="0 0 9 4.4"><rect x=".5" y=".5" width="4.2" height="3.2" rx="1.6" fill="none" stroke="#8a8a8a" stroke-width=".9"/><rect x="4.2" y=".5" width="4.2" height="3.2" rx="1.6" fill="none" stroke="#8a8a8a" stroke-width=".9"/></svg>
<div class="t" style="left:766.2px;top:474.6px;font-size:6.6px;font-style:italic;font-weight:bold;color:#e0e0e0">fx</div>
<svg style="left:773px;top:482px;" width="1.6" height="1.6" viewBox="0 0 1.6 1.6"><path d="M1.6 0V1.6H0Z" fill="#c8c8c8"/></svg>
<svg style="left:782.4px;top:475.8px;" width="8.4" height="6" viewBox="0 0 8.4 6"><rect width="8.4" height="6" rx=".6" fill="#e6e6e6"/><circle cx="4.2" cy="3" r="1.7" fill="#444"/></svg>
<svg style="left:799.8px;top:475.6px;" width="6.6" height="6.6" viewBox="0 0 6.6 6.6"><circle cx="3.3" cy="3.3" r="2.8" fill="none" stroke="#e0e0e0" stroke-width=".9"/><path d="M1.3 5.3A2.8 2.8 0 0 1 5.3 1.3Z" fill="#e0e0e0"/></svg>
<svg style="left:807.4px;top:482px;" width="1.6" height="1.6" viewBox="0 0 1.6 1.6"><path d="M1.6 0V1.6H0Z" fill="#c8c8c8"/></svg>
<svg style="left:815.4px;top:475.6px;" width="8" height="6.4" viewBox="0 0 8 6.4"><path d="M0 .8Q0 0 .8 0H3L3.8 1H7.4Q8 1 8 1.6V6.4H0Z" fill="#e6e6e6"/></svg>
<svg style="left:832.4px;top:475.4px;" width="6.6" height="6.8" viewBox="0 0 6.6 6.8"><rect x=".5" y=".5" width="5.6" height="5.8" rx=".6" fill="none" stroke="#e0e0e0" stroke-width=".9"/><path d="M3.3 2V4.8M1.9 3.4H4.7" stroke="#e0e0e0" stroke-width=".8"/></svg>
<svg style="left:849px;top:475.2px;" width="6.4" height="7.2" viewBox="0 0 6.4 7.2"><path d="M.2 1.4H6.2M2.2 1.2V.4H4.2V1.2" stroke="#cfcfcf" stroke-width=".8" fill="none"/><path d="M.9 2.2H5.5L5.1 7H1.3Z" fill="none" stroke="#cfcfcf" stroke-width=".8"/><path d="M2.4 3.2V6M4 3.2V6" stroke="#cfcfcf" stroke-width=".6"/></svg>
<div class="a" style="left:251px;top:147px;width:286px;height:214px;overflow:hidden"><div id="shui" style="position:absolute;left:65.9px;top:23px;font-size:153.6px;line-height:153.6px;font-weight:700;color:#fff;font-family:'Noto Sans CJK SC',sans-serif;filter:blur(.4px)">水</div></div>
<svg style="left:342.8px;top:191.7px;" width="64" height="64" viewBox="0 0 64 64"><circle cx="32" cy="32" r="31.5" fill="none" stroke="rgba(205,205,205,.88)" stroke-width="1"/></svg>
<div class="a" style="left:373.5px;top:190.79999999999998px;width:3px;height:2.8px;background:#858585;filter:blur(.3px)"></div>
<div class="a" style="left:341.8px;top:222.2px;width:3px;height:2.8px;background:#858585;filter:blur(.3px)"></div>
<div class="a" style="left:404.9px;top:222.2px;width:3px;height:2.8px;background:#858585;filter:blur(.3px)"></div>
<div class="a" style="left:373.5px;top:254.0px;width:3px;height:2.8px;background:#858585;filter:blur(.3px)"></div>
<div class="a" style="left:584.8px;top:144.8px;width:134.6px;height:275.8px;background:#3c3e3c;"></div>
<div class="a" style="left:585.3px;top:145.5px;width:134px;height:274.9px;background:#535552;"></div>
<div class="a" style="left:585.3px;top:145.5px;width:134px;height:13.2px;background:#424242;"></div>
<div class="a" style="left:586.3px;top:146.8px;width:17.5px;height:12px;background:#535353;"></div>
<div class="t" style="left:589.4px;top:148.6px;font-size:5.6px;color:#ececec;">属性</div>
<div class="t" style="left:608.6px;top:148.6px;font-size:5.6px;color:#a8a8a8;">字符</div>
<div class="t" style="left:627px;top:148.6px;font-size:5.6px;color:#a8a8a8;">段落</div>
<svg style="left:705px;top:151.2px;" width="4.2" height="3.4" viewBox="0 0 4.2 3.4"><path d="M.3 .2L1.9 1.7L.3 3.2M2.3 .2L3.9 1.7L2.3 3.2" fill="none" stroke="#b8b8b8" stroke-width=".8"/></svg>
<div class="a" style="left:710.3px;top:148px;width:0.8px;height:9px;background:#555;"></div>
<svg style="left:713px;top:150.8px;" width="4.4" height="3.6" viewBox="0 0 4.4 3.6"><path d="M0 .4H4.4M0 1.8H4.4M0 3.2H4.4" stroke="#b0b0b0" stroke-width=".7"/></svg>
<div class="a" style="left:712.3px;top:175.8px;width:7px;height:227.2px;background:#4d4f4c;"></div>
<div class="a" style="left:585.3px;top:417px;width:134px;height:1px;background:#434543;"></div>
<div class="a" style="left:585.5px;top:175.5px;width:125.5px;height:0.8px;background:#484848;"></div>
<div class="a" style="left:590.3px;top:162.4px;width:11px;height:10.8px;background:#2f2f2f;border-radius:1px"></div>
<svg style="left:591px;top:163px;" width="9.6" height="9.6" viewBox="0 0 9.6 9.6"><rect x="1.4" y="1.4" width="6.8" height="6.8" fill="none" stroke="#e4e4e4" stroke-width=".9"/><rect x="0" y="0" width="2.6" height="2.6" fill="#e4e4e4"/><rect x="7" y="0" width="2.6" height="2.6" fill="#e4e4e4"/><rect x="0" y="7" width="2.6" height="2.6" fill="#e4e4e4"/><rect x="7" y="7" width="2.6" height="2.6" fill="#e4e4e4"/></svg>
<svg style="left:604px;top:163.4px;" width="10" height="8.6" viewBox="0 0 10 8.6"><rect width="10" height="8.6" rx=".8" fill="#e6e6e6"/><ellipse cx="5" cy="4.3" rx="2.8" ry="2.3" fill="#333"/></svg>
<div class="t" style="left:618px;top:163.6px;font-size:6px;color:#d8d8d8;">实时形状属性</div>
<svg style="left:587.04px;top:181.62px;" width="3.92" height="1.96" viewBox="0 0 3.92 1.96"><path d="M0 0L1.96 1.96L3.92 0" fill="none" stroke="#b0b0b0" stroke-width="0.95"/></svg>
<div class="t" style="left:595px;top:178.3px;font-size:6px;color:#d0d0d0;">边框</div>
<div class="t" style="left:588.4px;top:190.2px;font-size:5.8px;color:#c8c8c8;">W:</div>
<div class="in" style="left:598.6px;top:190px;width:40px;height:8.4px;background:#424242;"></div>
<div class="t" style="left:601px;top:190.2px;font-size:5.8px;color:#e0e0e0;">186 像素</div>
<svg style="left:643.6px;top:192px;" width="8.4" height="4.4" viewBox="0 0 8.4 4.4"><rect x=".5" y=".5" width="4" height="3.2" rx="1.6" fill="none" stroke="#d8d8d8" stroke-width=".9"/><rect x="3.9" y=".5" width="4" height="3.2" rx="1.6" fill="none" stroke="#d8d8d8" stroke-width=".9"/></svg>
<div class="t" style="left:657px;top:190.2px;font-size:5.8px;color:#c8c8c8;">H:</div>
<div class="in" style="left:666px;top:190px;width:40px;height:8.4px;background:#424242;"></div>
<div class="t" style="left:668.4px;top:190.2px;font-size:5.8px;color:#e0e0e0;">186 像素</div>
<div class="t" style="left:590.4px;top:205.7px;font-size:5.8px;color:#c8c8c8;">X:</div>
<div class="in" style="left:598.6px;top:205.5px;width:40px;height:8.4px;background:#424242;"></div>
<div class="t" style="left:601px;top:205.7px;font-size:5.8px;color:#e0e0e0;">270 像素</div>
<div class="t" style="left:657.8px;top:205.7px;font-size:5.8px;color:#c8c8c8;">Y:</div>
<div class="in" style="left:666px;top:205.5px;width:40px;height:8.4px;background:#424242;"></div>
<div class="t" style="left:668.4px;top:205.7px;font-size:5.8px;color:#e0e0e0;">133 像素</div>
<svg style="left:587.04px;top:219.32000000000002px;" width="3.92" height="1.96" viewBox="0 0 3.92 1.96"><path d="M0 0L1.96 1.96L3.92 0" fill="none" stroke="#b0b0b0" stroke-width="0.95"/></svg>
<div class="t" style="left:595px;top:216px;font-size:6px;color:#d0d0d0;">形状细节</div>
<svg style="left:588.8px;top:226.6px;" width="12" height="8.4" viewBox="0 0 12 8.4"><rect width="12" height="8.4" fill="#f4f4f4"/><path d="M2.2 7.4L9.6 1" stroke="#d22" stroke-width="1"/></svg>
<svg style="left:604.6px;top:226.6px;" width="11.6" height="8.4" viewBox="0 0 11.6 8.4"><rect width="11.6" height="8.4" fill="#f4f4f4"/><rect x="2.6" y="3" width="6.4" height="2.4" fill="#111"/></svg>
<div class="in" style="left:619px;top:226.4px;width:35px;height:8.6px;background:#424242;"></div>
<div class="t" style="left:621.4px;top:226.7px;font-size:5.8px;color:#e0e0e0;">2 像素</div>
<div class="in" style="left:654.4px;top:226.4px;width:5.6px;height:8.6px;background:#474747;"></div>
<svg style="left:655.5200000000001px;top:230.16px;" width="3.36" height="1.68" viewBox="0 0 3.36 1.68"><path d="M0 0L1.68 1.68L3.36 0" fill="none" stroke="#ababab" stroke-width="0.95"/></svg>
<div class="in" style="left:663px;top:226.4px;width:43px;height:8.6px;background:#424242;"></div>
<svg style="left:665.6px;top:230px;" width="34" height="1.4" viewBox="0 0 34 1.4"><rect width="34" height="1.4" fill="#e0e0e0"/></svg>
<svg style="left:701.12px;top:230.16px;" width="3.36" height="1.68" viewBox="0 0 3.36 1.68"><path d="M0 0L1.68 1.68L3.36 0" fill="none" stroke="#ababab" stroke-width="0.95"/></svg>
<div class="in" style="left:589.6px;top:241px;width:27.4px;height:8.4px;background:#424242;"></div>
<svg style="left:593.2px;top:243.1px;" width="4.4" height="4.4" viewBox="0 0 4.4 4.4"><circle cx="2.2" cy="2.2" r="1.5" fill="none" stroke="#e6e6e6" stroke-width="1.1"/></svg>
<svg style="left:611.32px;top:244.76px;" width="3.36" height="1.68" viewBox="0 0 3.36 1.68"><path d="M0 0L1.68 1.68L3.36 0" fill="none" stroke="#ababab" stroke-width="0.95"/></svg>
<div class="in" style="left:619.9px;top:241px;width:30.6px;height:8.4px;background:#424242;"></div>
<svg style="left:623.8px;top:242.6px;" width="6.4" height="5.4" viewBox="0 0 6.4 5.4"><path d="M6.2 .4H2.8Q.4 .6 .4 2.7Q.4 4.8 2.8 5H6.2V3.6H3.2Q2.2 3.5 2.2 2.7Q2.2 1.9 3.2 1.8H6.2Z" fill="#e8e8e8"/></svg>
<svg style="left:644.9200000000001px;top:244.76px;" width="3.36" height="1.68" viewBox="0 0 3.36 1.68"><path d="M0 0L1.68 1.68L3.36 0" fill="none" stroke="#ababab" stroke-width="0.95"/></svg>
<div class="in" style="left:653.8px;top:241px;width:52.2px;height:8.4px;background:#424242;"></div>
<svg style="left:656.4px;top:242.4px;" width="6.2" height="5.8" viewBox="0 0 6.2 5.8"><path d="M.8 5.6V2Q.8 .8 2 .8H6" stroke="#e8e8e8" stroke-width="1.5" fill="none"/><rect x="3" y="2.8" width="2.8" height="2.6" fill="none" stroke="#e8e8e8" stroke-width=".7"/></svg>
<svg style="left:701.12px;top:244.76px;" width="3.36" height="1.68" viewBox="0 0 3.36 1.68"><path d="M0 0L1.68 1.68L3.36 0" fill="none" stroke="#ababab" stroke-width="0.95"/></svg>
<svg style="left:587.04px;top:254.82000000000002px;" width="3.92" height="1.96" viewBox="0 0 3.92 1.96"><path d="M0 0L1.96 1.96L3.92 0" fill="none" stroke="#b0b0b0" stroke-width="0.95"/></svg>
<div class="t" style="left:595px;top:251.5px;font-size:6px;color:#d0d0d0;">路径操作</div>
<div class="a" style="left:613.2px;top:261.6px;width:15.8px;height:11.8px;background:#3f3f3f;border-radius:1px"></div>
<div class="a" style="left:631px;top:261.6px;width:15.8px;height:11.8px;background:#3f3f3f;border-radius:1px"></div>
<div class="a" style="left:648.4px;top:261.6px;width:15.8px;height:11.8px;background:#3f3f3f;border-radius:1px"></div>
<div class="a" style="left:665.8px;top:261.6px;width:15.8px;height:11.8px;background:#3f3f3f;border-radius:1px"></div>
<svg style="left:617.2px;top:263.6px;" width="7.4" height="7.4" viewBox="0 0 7.4 7.4"><rect x="0" y="0" width="4.6" height="4.6" fill="#e8e8e8"/><rect x="2.4" y="2.4" width="4.6" height="4.6" fill="#e8e8e8" stroke="#3f3f3f" stroke-width=".5"/></svg>
<svg style="left:635px;top:263.6px;" width="7.4" height="7.4" viewBox="0 0 7.4 7.4"><rect x=".4" y=".4" width="4.4" height="4.4" fill="#e8e8e8"/><rect x="2.6" y="2.6" width="4.2" height="4.2" fill="#3f3f3f" stroke="#e8e8e8" stroke-width=".7"/></svg>
<svg style="left:652.4px;top:263.6px;" width="7.4" height="7.4" viewBox="0 0 7.4 7.4"><rect x=".4" y=".4" width="4.4" height="4.4" fill="none" stroke="#e8e8e8" stroke-width=".7"/><rect x="2.6" y="2.6" width="4.2" height="4.2" fill="none" stroke="#e8e8e8" stroke-width=".7"/><rect x="2.6" y="2.6" width="2.2" height="2.2" fill="#e8e8e8"/></svg>
<svg style="left:669.8px;top:263.6px;" width="7.4" height="7.4" viewBox="0 0 7.4 7.4"><rect x=".4" y=".4" width="4.4" height="4.4" fill="#e8e8e8"/><rect x="2.6" y="2.6" width="4.2" height="4.2" fill="#e8e8e8"/><rect x="2.6" y="2.6" width="2.2" height="2.2" fill="#3f3f3f"/></svg>
<div class="t" style="left:668.2px;top:422.6px;font-size:3.2px;color:#e8e8e8;">椭圆 1</div>
<div class="a" style="left:698.2px;top:23.1px;font-size:17px;line-height:20px;font-weight:500;-webkit-text-stroke:.35px #e6e6e6;color:#e6e6e6;letter-spacing:.1px;white-space:nowrap;text-shadow:0 0 2px rgba(0,0,0,.75),.6px .8px 1px rgba(0,0,0,.6);filter:blur(.35px)">叫我呆呆北</div>
<div class="a" id="bili" style="left:0;top:0"><span class="a" style="left:791.2px;top:13.81px;font-family:'DejaVu Sans',sans-serif;font-weight:bold;font-size:36.4px;line-height:36.4px;color:#dedede;transform-origin:0 84.6%;transform:rotate(-4deg) scale(0.68,0.64);text-shadow:0 0 1.5px rgba(0,0,0,.6);filter:blur(.4px)">b</span><span class="a" style="left:806.2px;top:24.35px;font-family:'DejaVu Sans',sans-serif;font-weight:bold;font-size:22.4px;line-height:22.4px;color:#dedede;transform-origin:0 84.6%;transform:rotate(-2deg) scale(0.95,1);text-shadow:0 0 1.5px rgba(0,0,0,.6);filter:blur(.4px)">i</span><span class="a" style="left:811.4px;top:17.96px;font-family:'DejaVu Sans',sans-serif;font-weight:bold;font-size:29.6px;line-height:29.6px;color:#dedede;transform-origin:0 84.6%;transform:rotate(0deg) scale(0.82,1);text-shadow:0 0 1.5px rgba(0,0,0,.6);filter:blur(.4px)">l</span><span class="a" style="left:816.8px;top:24.15px;font-family:'DejaVu Sans',sans-serif;font-weight:bold;font-size:22.4px;line-height:22.4px;color:#dedede;transform-origin:0 84.6%;transform:rotate(2deg) scale(0.95,1);text-shadow:0 0 1.5px rgba(0,0,0,.6);filter:blur(.4px)">i</span><span class="a" style="left:823.6px;top:14.01px;font-family:'DejaVu Sans',sans-serif;font-weight:bold;font-size:36.4px;line-height:36.4px;color:#dedede;transform-origin:0 84.6%;transform:rotate(3deg) scale(0.68,0.64);text-shadow:0 0 1.5px rgba(0,0,0,.6);filter:blur(.4px)">b</span><span class="a" style="left:838.2px;top:24.25px;font-family:'DejaVu Sans',sans-serif;font-weight:bold;font-size:22.4px;line-height:22.4px;color:#dedede;transform-origin:0 84.6%;transform:rotate(-2deg) scale(0.95,1);text-shadow:0 0 1.5px rgba(0,0,0,.6);filter:blur(.4px)">i</span><span class="a" style="left:843.8px;top:16.91px;font-family:'DejaVu Sans',sans-serif;font-weight:bold;font-size:30.6px;line-height:30.6px;color:#dedede;transform-origin:0 84.6%;transform:rotate(0deg) scale(0.82,1);text-shadow:0 0 1.5px rgba(0,0,0,.6);filter:blur(.4px)">l</span><span class="a" style="left:849.0px;top:24.35px;font-family:'DejaVu Sans',sans-serif;font-weight:bold;font-size:22.4px;line-height:22.4px;color:#dedede;transform-origin:0 84.6%;transform:rotate(2deg) scale(0.95,1);text-shadow:0 0 1.5px rgba(0,0,0,.6);filter:blur(.4px)">i</span><i class="a" style="left:792.4px;top:16.4px;width:5.1px;height:17px;background:#dedede;transform-origin:50% 100%;transform:rotate(-4deg);box-shadow:0 0 1.5px rgba(0,0,0,.6);filter:blur(.4px);clip-path:polygon(-4% 0,104% 0,100% 100%,0 100%)"></i><i class="a" style="left:826.2px;top:16.6px;width:5.1px;height:17px;background:#dedede;transform-origin:50% 100%;transform:rotate(3deg);box-shadow:0 0 1.5px rgba(0,0,0,.6);filter:blur(.4px);clip-path:polygon(-4% 0,104% 0,100% 100%,0 100%)"></i></div>
<svg style="left:857.6px;top:17.6px;" width="9.4" height="9.2" viewBox="0 0 9.4 9.2"><path d="M.7 3.6V8.5H8.7V3.6" fill="none" stroke="#e2e2e2" stroke-width="1.2"/><path d="M4.7 6V1M2.6 2.8L4.7 .6L6.8 2.8" fill="none" stroke="#e2e2e2" stroke-width="1.1"/></svg>
<svg style="left:851.78px;top:21.09px;" width="3.64" height="1.82" viewBox="0 0 3.64 1.82"><path d="M0 0L1.82 1.82L3.64 0" fill="none" stroke="#8a8a8a" stroke-width="0.95"/></svg>
<div class="a" style="left:-4.6px;top:482px;width:8px;height:14px;border-radius:50%;background:#6f9fc8;filter:blur(.6px)"></div>
<div class="a" style="left:866px;top:0;width:4px;height:3px;background:linear-gradient(215deg,#2a6fd0 40%,rgba(50,100,190,0) 75%)"></div>
<div class="a" style="left:865px;top:484px;width:5px;height:5px;background:linear-gradient(315deg,#86a6c6 25%,rgba(110,140,170,0) 70%)"></div>
<div class="a" style="left:0;top:0;width:4px;height:3px;background:linear-gradient(135deg,#1a2a78 40%,rgba(40,50,110,0) 100%)"></div>
</body></html>
